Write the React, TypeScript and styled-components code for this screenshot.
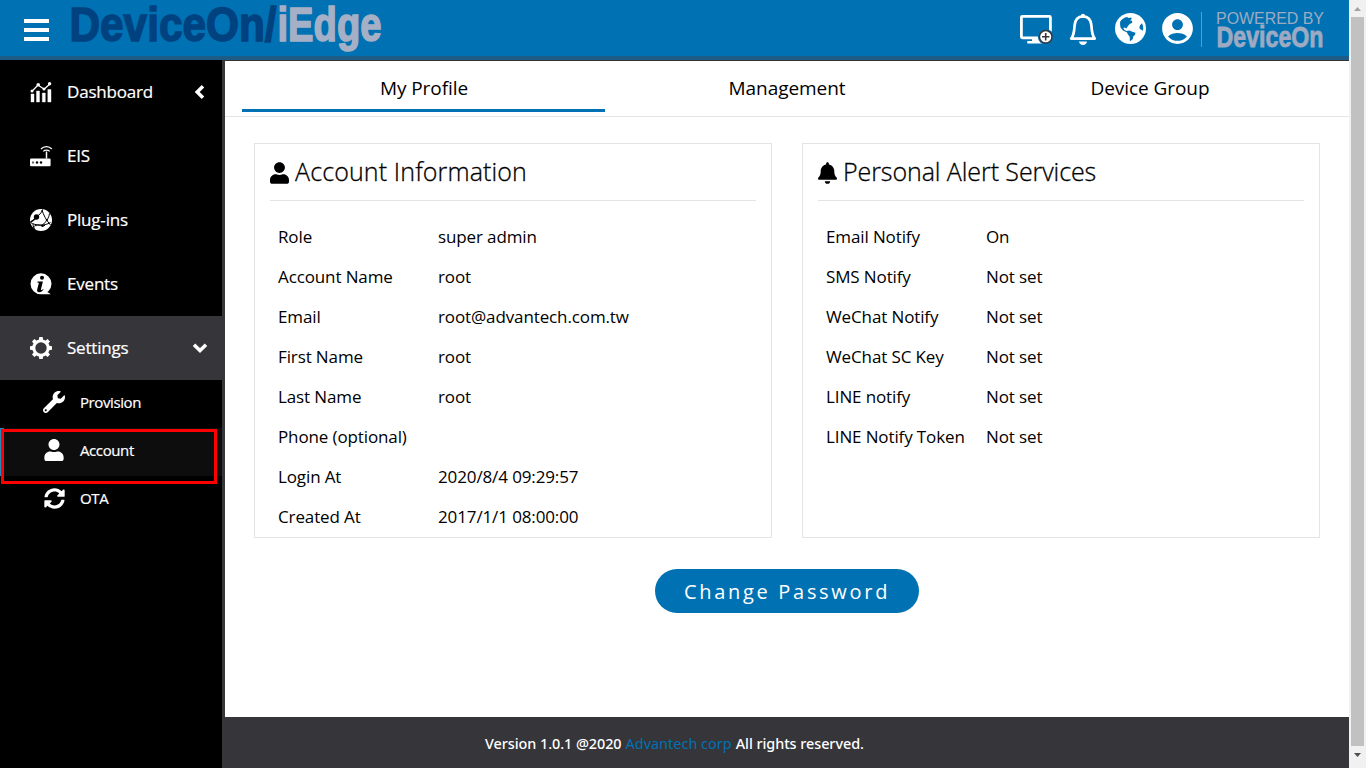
import React from "react";
import styled, { createGlobalStyle } from "styled-components";
import { FaUser, FaBell, FaSyncAlt, FaWrench } from "react-icons/fa";
import { MdAccountCircle } from "react-icons/md";

const GlobalStyle = createGlobalStyle`
  * { box-sizing: border-box; }
  body { margin: 0; overflow: hidden; font-family: "Open Sans", "Noto Sans", sans-serif; color: #000; background: #fff; }
`;

const Page = styled.div`
  display: flex;
  width: 1366px;
  height: 768px;
`;
const Shell = styled.div`
  width: 1349px;
  display: flex;
  flex-direction: column;
`;
const Header = styled.header`
  height: 60px;
  display: flex;
  justify-content: space-between;
  background: #0072b3;
  border-bottom: 4px solid #1f5c85;
`;
const Brand = styled.div`
  display: flex;
  align-items: flex-start;
`;
const MenuButton = styled.button`
  display: flex;
  flex-direction: column;
  gap: 5px;
  width: 25px;
  margin: 19px 20px 0 24px;
  padding: 0;
  border: 0;
  background: none;
`;
const MenuLine = styled.span`
  height: 4px;
  background: #fff;
`;
const Tools = styled.div`
  display: flex;
  align-items: flex-start;
  color: #fff;
`;
const Tool = styled.span<{ $gap: number; $top: number }>`
  display: flex;
  margin: ${(p) => p.$top}px ${(p) => p.$gap}px 0 0;
`;
const Divider = styled.span`
  width: 1px;
  height: 35px;
  margin: 12px 14px 0 0;
  background: #5a9dca;
`;
const Powered = styled.div`
  display: flex;
  width: 133px;
`;
const Wordmark = styled.svg`
  height: 56px;
  overflow: visible;
  font-family: "Liberation Sans", sans-serif;
`;
const Body = styled.div`
  flex: 1;
  display: flex;
`;
const Sidebar = styled.nav`
  width: 225px;
  background: #000;
  border-right: 3px solid #363639;
  color: #fff;
  -webkit-text-stroke: 0.2px #fff;
`;
const Item = styled.div<{ $open?: boolean }>`
  height: 64px;
  display: flex;
  align-items: center;
  padding: 0 14px 0 29px;
  font-size: 17px;
  letter-spacing: -0.2px;
  background: ${(p) => (p.$open ? "#36353a" : "transparent")};
`;
const ItemIcon = styled.span`
  display: flex;
  width: 24px;
  margin-right: 14px;
`;
const ItemText = styled.span`
  flex: 1;
  padding-bottom: 2px;
`;
const SubItem = styled.div<{ $active?: boolean }>`
  position: relative;
  height: 48px;
  display: flex;
  align-items: center;
  padding: 0 0 4px 39px;
  font-size: 15px;
  letter-spacing: -0.4px;
  background: ${(p) => (p.$active ? "#0d0d0d" : "transparent")};
  border-left: 4px solid ${(p) => (p.$active ? "#2a86bd" : "transparent")};
`;
const SubIcon = styled.span`
  display: flex;
  justify-content: center;
  width: 22px;
  margin-right: 15px;
`;
const SubText = styled.span`
  padding-bottom: 1px;
`;
const Marker = styled.span`
  position: absolute;
  left: -3px;
  top: 1px;
  width: 216px;
  height: 55px;
  border: 3px solid #fe0000;
  z-index: 1;
`;
const Content = styled.main`
  width: 1124px;
  display: flex;
  flex-direction: column;
  border-top: 1px solid #36353a;
`;
const Tabs = styled.div`
  height: 56px;
  display: flex;
  padding: 0 17px;
  border-bottom: 1px solid #e4e4e4;
`;
const Tab = styled.div<{ $active?: boolean }>`
  width: 363px;
  height: 51px;
  display: flex;
  align-items: center;
  justify-content: center;
  padding: 6px 0 0 1px;
  font-size: 19px;
  letter-spacing: -0.06px;
  border-bottom: 3px solid ${(p) => (p.$active ? "#0072b3" : "transparent")};
`;
const Cards = styled.div`
  display: flex;
  gap: 30px;
  padding: 26px 29px 0;
`;
const Card = styled.section`
  width: 518px;
  height: 395px;
  padding: 0 15px;
  border: 1px solid #e4e4e4;
`;
const CardHead = styled.h2<{ $track: number }>`
  height: 57px;
  margin: 0 0 16px;
  display: flex;
  align-items: center;
  border-bottom: 1px solid #e4e4e4;
  font-size: 25px;
  font-weight: 300;
  letter-spacing: ${(p) => p.$track}px;
  -webkit-text-stroke: 0.3px #000;
`;
const CardIcon = styled.span`
  display: flex;
  width: 19px;
  justify-content: center;
  margin: 0 6px 0 0;
  padding-top: 1px;
`;
const CardTitle = styled.span`
  padding-bottom: 2px;
`;
const Row = styled.div`
  height: 40px;
  display: grid;
  grid-template-columns: 160px 1fr;
  align-items: center;
  padding: 0 0 2px 8px;
  font-size: 17px;
  letter-spacing: -0.12px;
`;
const Change = styled.button`
  align-self: center;
  width: 264px;
  height: 44px;
  margin: 31px 0 0;
  padding: 0;
  border: 0;
  border-radius: 22px;
  background: #0072b3;
  color: #fff;
  font: 20px "Open Sans", sans-serif;
  letter-spacing: 2.7px;
`;
const Footer = styled.footer`
  height: 51px;
  margin-top: auto;
  display: flex;
  align-items: center;
  gap: 4px;
  padding: 2px 0 0 260px;
  background: #36353a;
  color: #fff;
  font: 500 14.4px "Noto Sans", sans-serif;
  letter-spacing: -0.05px;
  white-space: pre;
`;
const Link = styled.a`
  color: #0072b3;
  font-weight: 400;
  letter-spacing: 0.04px;
`;
const Scrollbar = styled.div`
  width: 17px;
  display: flex;
  flex-direction: column;
  align-items: center;
  background: #f1f1f1;
`;
const Thumb = styled.div`
  width: 13px;
  height: 729px;
  background: #c1c1c1;
`;
const Arrow = styled.svg`
  width: 17px;
  height: 17px;
`;

const Logo = () => (
  <Wordmark width="316" fontWeight="700" fontSize="48.5" strokeWidth="1.6">
    <text x="0.5" y="41" textLength="207" lengthAdjust="spacingAndGlyphs" fill="#004280" stroke="#004280">DeviceOn/</text>
    <text x="208.5" y="41" textLength="104" lengthAdjust="spacingAndGlyphs" fill="#a5b0c6" stroke="#a5b0c6">iEdge</text>
  </Wordmark>
);
const PoweredLogo = () => (
  <Wordmark width="120" fill="#9eaac2">
    <text x="0" y="23.5" fontSize="16" textLength="108" lengthAdjust="spacingAndGlyphs">POWERED BY</text>
    <text x="0.5" y="46.5" fontSize="29" fontWeight="700" textLength="107" lengthAdjust="spacingAndGlyphs" stroke="#9eaac2" strokeWidth="0.8">DeviceOn</text>
  </Wordmark>
);
const MonitorIcon = () => (
  <svg width="33" height="30" viewBox="0 0 33 30" fill="none">
    <rect x="1.4" y="1.4" width="29" height="21.4" rx="1" stroke="#fff" strokeWidth="2.8" />
    <path d="M12 23h8v3h4v2.6H7.3V26H12z" fill="#fff" />
    <circle cx="25.700" cy="21.800" r="7.800" fill="#0072b3" />
    <circle cx="25.700" cy="21.800" r="6.300" fill="#fff" stroke="#36353a" strokeWidth="1.500" />
    <path d="M22 21.800h7.400M25.700 18.100v7.400" stroke="#36353a" strokeWidth="1.600" />
  </svg>
);
const BellIcon = () => (
  <svg width="28" height="33" viewBox="0 0 28 33" fill="none">
    <path d="M14 3.400C8.500 3.600 6 7.600 5.600 12.400 5.200 18.500 5 22.500 2.200 25.600H25.800C23 22.500 22.800 18.500 22.400 12.400 22 7.600 19.500 3.600 14 3.400Z" stroke="#fff" strokeWidth="2.700" strokeLinejoin="round" />
    <path d="M11.800 3.500a2.200 2.800 0 0 1 4.400 0ZM10 28.500h8c-.3 2.300-1.800 3.500-4 3.500s-3.700-1.200-4-3.500Z" fill="#fff" />
  </svg>
);
const EarthIcon = () => (
  <svg width="31" height="31" viewBox="0 0 31 31">
    <circle cx="15.500" cy="15.500" r="15.500" fill="#fff" />
    <path d="M5.200 8.500C7 6 9.500 4.300 12 4l1.800 1 2.200-.5.8 1.300-1.600 1.700 1.800.3.300 2-2.600 1.200-1.900 2.300-1.300 2.200-1.900-1-1.300.5 1.200 2 2.500 1.300-.5 1-3.500-1.800-2.500-3L5 11Z" fill="#0072b3" />
    <path d="M11.300 18l3.200-.6 2.800 1.300 3.200 1-.5 2.200-1.700 1.400-.5 2.600-1.900 1.900-1 .1-.2-4.200-1.900-2.400Z" fill="#0072b3" />
    <path d="M27 10.300l-2.200 2.200-.4 2.700 1.500 1.600 1.500.2.400 1.500c.8-2.700.5-5.700-.8-8.200Z" fill="#0072b3" />
  </svg>
);
const ChartIcon = () => (
  <svg width="24" height="22" viewBox="0 0 24 22" fill="#fff">
    <path d="M2 13h3v8H2zM7.500 10h3v11h-3zM13.300 12h3v9h-3zM18.800 8.500h3.200v12.500h-3.200z" stroke="#fff" strokeWidth=".4" />
    <path d="M3 10.200L9 4l6.200 4.200L20.800 3" stroke="#fff" strokeWidth="1.300" fill="none" />
    <circle cx="3" cy="10" r="1.500" /><circle cx="9.200" cy="3.800" r="1.800" /><circle cx="15" cy="8" r="1.500" /><circle cx="20.600" cy="2.800" r="1.700" />
  </svg>
);
const RouterIcon = () => (
  <svg width="24" height="22" viewBox="0 0 24 22" fill="none">
    <rect x="1" y="13.500" width="20.600" height="7.800" rx="1.200" fill="#fff" />
    <path d="M17.500 6.500v7" stroke="#fff" strokeWidth="1.500" />
    <path d="M14.300 6.300c1.600-1.700 4.800-1.700 6.400 0M12 4c2.800-3.300 8-3.300 10.800 0" stroke="#fff" strokeWidth="1.200" />
    <path d="M4 16.500v2" stroke="#000" strokeWidth="1.200" />
    <circle cx="8" cy="17.500" r="1.200" fill="#000" /><circle cx="12" cy="17.500" r="1.200" fill="#000" />
  </svg>
);
const NetworkIcon = () => (
  <svg width="24" height="24" viewBox="0 0 24 24" fill="none">
    <circle cx="12" cy="12" r="11" fill="#fff" />
    <g stroke="#000" strokeWidth="1">
      <path d="M7.500 8.500C10 7 12.500 5.500 13.500 1.500M13 2c1.500 5 4 10 8.500 15M1.500 14.500c5 3 13 4 20 0M4 19.500C8 15 12 18 16 17.500M13 17.500C17 14 20 10 20.500 5.500M4 16c0 2 1 4 2 5.500" />
    </g>
    <path d="M1.500 14c2-1 4-2.500 5.500-4" stroke="#000" strokeWidth="1.600" />
    <circle cx="7.500" cy="9" r="2.700" fill="#000" /><circle cx="13.500" cy="17.800" r="1.300" fill="#000" /><circle cx="17.800" cy="12" r="1.100" fill="#000" />
  </svg>
);
const InfoIcon = () => (
  <svg width="24" height="24" viewBox="0 0 24 24">
    <path d="M12 1.300a10.500 10.500 0 1 1 0 21 10.500 10.500 0 1 1 0-21ZM17 19l4.800 3.300H15Z" fill="#fff" />
    <circle cx="13" cy="5.800" r="2" fill="#000" />
    <path d="M8.500 9.600h5.400l-2 8c-.1.800.8.600 2.200-.7l.5.600c-1.800 2.300-3.300 2.800-4.600 2.700-1.700-.1-2.200-1.200-1.800-2.700l1.600-6.200c.1-.7-.5-.8-1.500-.8Z" fill="#000" />
  </svg>
);
const GearIcon = () => (
  <svg width="24" height="24" viewBox="0 0 24 24" fill="none">
    <circle cx="12" cy="12" r="7.200" stroke="#fff" strokeWidth="3" />
    {[0, 45, 90, 135, 180, 225, 270, 315].map((a) => (
      <path key={a} d="M9.800 4.500L10.300 1h3.400l.5 3.500z" fill="#fff" transform={`rotate(${a} 12 12)`} />
    ))}
  </svg>
);
const ChevronIcon = ({ down }: { down?: boolean }) => (
  <svg width="16" height="16" viewBox="0 0 16 16" fill="none">
    <path d={down ? "M2 4.800L8 10.600 14 4.800" : "M11 2.200L5.200 8l5.800 5.800"} stroke="#fff" strokeWidth="3.500" />
  </svg>
);

const nav = [
  { text: "Dashboard", icon: <ChartIcon />, chevron: true },
  { text: "EIS", icon: <RouterIcon /> },
  { text: "Plug-ins", icon: <NetworkIcon /> },
  { text: "Events", icon: <InfoIcon /> },
];
const account = [
  ["Role", "super admin"], ["Account Name", "root"], ["Email", "root@advantech.com.tw"], ["First Name", "root"],
  ["Last Name", "root"], ["Phone (optional)", ""], ["Login At", "2020/8/4 09:29:57"], ["Created At", "2017/1/1 08:00:00"],
];
const alerts = [
  ["Email Notify", "On"], ["SMS Notify", "Not set"], ["WeChat Notify", "Not set"],
  ["WeChat SC Key", "Not set"], ["LINE notify", "Not set"], ["LINE Notify Token", "Not set"],
];
const Rows = ({ data }: { data: string[][] }) => (
  <>{data.map(([k, v]) => <Row key={k}><span>{k}</span><span>{v}</span></Row>)}</>
);

export default function App() {
  return (
    <Page>
      <GlobalStyle />
      <Shell>
        <Header>
          <Brand>
            <MenuButton aria-label="Menu"><MenuLine /><MenuLine /><MenuLine /></MenuButton>
            <Logo />
          </Brand>
          <Tools>
            <Tool $top={15} $gap={16}><MonitorIcon /></Tool>
            <Tool $top={13} $gap={18}><BellIcon /></Tool>
            <Tool $top={13} $gap={13}><EarthIcon /></Tool>
            <Tool $top={10} $gap={5}><MdAccountCircle size={37} /></Tool>
            <Divider />
            <Powered><PoweredLogo /></Powered>
          </Tools>
        </Header>
        <Body>
          <Sidebar>
            {nav.map((n) => (
              <Item key={n.text}>
                <ItemIcon>{n.icon}</ItemIcon>
                <ItemText>{n.text}</ItemText>
                {n.chevron && <ChevronIcon />}
              </Item>
            ))}
            <Item $open>
              <ItemIcon><GearIcon /></ItemIcon>
              <ItemText>Settings</ItemText>
              <ChevronIcon down />
            </Item>
            <SubItem><SubIcon><FaWrench size={22} /></SubIcon><SubText>Provision</SubText></SubItem>
            <SubItem $active><SubIcon><FaUser size={22} /></SubIcon><SubText>Account</SubText><Marker /></SubItem>
            <SubItem><SubIcon><FaSyncAlt size={21} /></SubIcon><SubText>OTA</SubText></SubItem>
          </Sidebar>
          <Content>
            <Tabs>
              <Tab $active>My Profile</Tab>
              <Tab>Management</Tab>
              <Tab>Device Group</Tab>
            </Tabs>
            <Cards>
              <Card>
                <CardHead $track={0.13}><CardIcon><FaUser size={22} /></CardIcon><CardTitle>Account Information</CardTitle></CardHead>
                <Rows data={account} />
              </Card>
              <Card>
                <CardHead $track={-0.08}><CardIcon><FaBell size={22} /></CardIcon><CardTitle>Personal Alert Services</CardTitle></CardHead>
                <Rows data={alerts} />
              </Card>
            </Cards>
            <Change>Change Password</Change>
            <Footer>
              <span>Version 1.0.1 @2020</span><Link>Advantech corp</Link><span>All rights reserved.</span>
            </Footer>
          </Content>
        </Body>
      </Shell>
      <Scrollbar>
        <Arrow viewBox="0 0 17 17"><path d="M5 11l3.500-4 3.500 4z" fill="#a3a3a3" /></Arrow>
        <Thumb />
        <Arrow viewBox="0 0 17 17"><path d="M5 7l3.500 4L12 7z" fill="#505050" /></Arrow>
      </Scrollbar>
    </Page>
  );
}
